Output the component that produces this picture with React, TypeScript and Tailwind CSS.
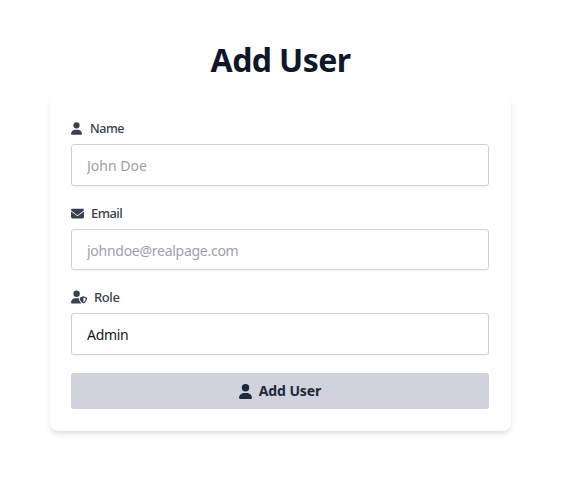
import { FaUser, FaEnvelope, FaUserShield } from "react-icons/fa6";
import type { ReactNode } from "react";

function Label({ icon, text, className }: { icon: ReactNode; text: string; className: string }) {
  return (
    <label className={`flex h-[18px] items-center font-medium text-[#374151] ${className}`}>
      {icon}
      <span className="pt-[2px]">{text}</span>
    </label>
  );
}

const field =
  "block w-full rounded-[3px] border border-[#d0d2db] bg-white px-[15px] text-[14px] text-gray-900 shadow-[0_1px_2px_rgba(0,0,0,0.05)] outline-none placeholder:text-gray-400";

export default function App() {
  return (
    <main className="h-[497px] overflow-hidden bg-white pt-[40px] pl-[50px] font-['Noto_Sans','Open_Sans',sans-serif]">
      <h1 className="h-[40px] w-[461px] text-center text-[32px] leading-[40px] font-bold tracking-[-0.6px] text-[#0f172a]">Add User</h1>
      <form className="mt-[15px] h-[336px] w-[461px] rounded-lg bg-white pr-[22px] pl-[21px] pt-[24px] shadow-md">
        <Label icon={<FaUser className="h-[13px] w-[11px]" />} text="Name" className="gap-[8px] text-[12.5px] tracking-[-0.45px]" />
        <input placeholder="John Doe" className={`mt-[7px] h-[42px] pt-px ${field}`} />
        <Label icon={<FaEnvelope size={13} />} text="Email" className="mt-[18px] gap-[7px] text-[13px] tracking-[-0.55px]" />
        <input placeholder="johndoe@realpage.com" className={`mt-[7px] h-[41px] pt-[2px] tracking-[-0.27px] ${field}`} />
        <Label icon={<FaUserShield size={16} />} text="Role" className="mt-[18px] gap-[7px] text-[13px] tracking-[-0.4px]" />
        <input defaultValue="Admin" className={`mt-[7px] h-[42px] pt-px tracking-[-0.3px] ${field}`} />
        <button type="button" className="mt-[18px] flex h-[36px] w-full items-center justify-center gap-[7px] rounded-[3px] bg-[#d0d3dc] text-[14px] font-bold tracking-[-0.1px] text-gray-800">
          <FaUser className="h-[15px] w-[13px]" />
          <span className="pb-px">Add User</span>
        </button>
      </form>
    </main>
  );
}
